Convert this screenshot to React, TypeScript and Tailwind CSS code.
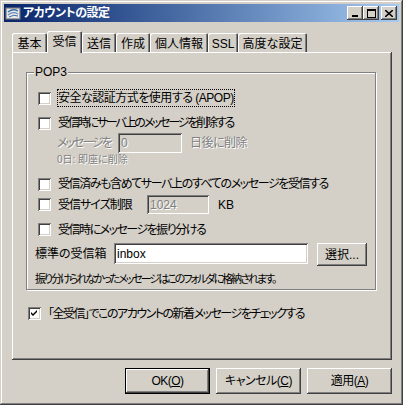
import React from "react";

const raised =
  "shadow-[inset_-1px_-1px_#404040,inset_1px_1px_#fff,inset_-2px_-2px_#808080,inset_2px_2px_#d4d0c8]";
const sunken =
  "shadow-[inset_1px_1px_#808080,inset_-1px_-1px_#fff,inset_2px_2px_#404040,inset_-2px_-2px_#d4d0c8]";
const disabledText = "text-[#808080] [text-shadow:1px_1px_0_#fff]";

function Check({ checked }: { checked?: boolean }) {
  return (
    <div className={`w-[13px] h-[13px] shrink-0 bg-white ${sunken} flex items-center justify-center`}>
      {checked && (
        <svg width="7" height="7" viewBox="0 0 7 7">
          <path d="M0 2 L2 4 L6 0 L6 2 L2 6 L0 4 Z" fill="#000" />
        </svg>
      )}
    </div>
  );
}

function CheckRow({
  label,
  checked,
  focus,
  className = "",
  track,
}: {
  label: string;
  checked?: boolean;
  focus?: boolean;
  className?: string;
  track: string;
}) {
  return (
    <div className={`flex items-center ${className}`}>
      <Check checked={checked} />
      <span
        className={`ml-[6px] h-[18px] leading-[16px] whitespace-nowrap border ${track} ${
          focus ? "border-dotted border-black" : "border-transparent"
        }`}
      >
        {label}
      </span>
    </div>
  );
}

function Tab({ label, width, selected }: { label: string; width: number; selected?: boolean }) {
  return (
    <div
      style={{ width }}
      className={
        selected
          ? "relative z-10 h-[22px] -mb-[1px] bg-[#d4d0c8] rounded-t-[2px] shadow-[inset_1px_1px_#fff,inset_-1px_0_#404040,inset_-2px_0_#808080] flex justify-center pt-[4px] leading-[14px]"
          : "h-[19px] bg-[#d4d0c8] rounded-t-[2px] shadow-[inset_1px_1px_#fff,inset_-1px_0_#404040,inset_-2px_0_#808080] flex justify-center pt-[4px] leading-[14px]"
      }
    >
      {label}
    </div>
  );
}

function TitleButton({ children, className = "" }: { children: React.ReactNode; className?: string }) {
  return (
    <div className={`w-[16px] h-[14px] bg-[#d4d0c8] ${raised} flex items-center justify-center ${className}`}>
      {children}
    </div>
  );
}

function Button({ children, isDefault }: { children: React.ReactNode; isDefault?: boolean }) {
  return (
    <div
      className={`w-[85px] h-[26px] bg-[#d4d0c8] ${raised} flex items-center justify-center tracking-[-0.5px] ${
        isDefault ? "border border-black" : ""
      }`}
    >
      {children}
    </div>
  );
}

export default function App() {
  return (
    <div className="w-[403px] h-[405px] bg-[#d4d0c8] p-[4px] flex flex-col text-[12px] text-black font-['Liberation_Sans','Noto_Sans_CJK_JP',sans-serif] [font-feature-settings:'palt'] shadow-[inset_-1px_-1px_#404040,inset_1px_1px_#d4d0c8,inset_-2px_-2px_#808080,inset_2px_2px_#fff]">
      {/* title bar */}
      <div className="h-[18px] flex items-center bg-linear-to-r from-[#0a246a] to-[#a6caf0] pr-[2px]">
        <svg width="16" height="16" viewBox="0 0 16 16" className="ml-[1px]">
          <rect x="1" y="3" width="14" height="11" fill="#c0c0c0" stroke="#808080" />
          <rect x="2" y="4" width="12" height="9" fill="#e8e8e8" />
          <path d="M3 7 Q8 3 13 6" stroke="#3a6ea5" strokeWidth="1.3" fill="none" />
          <path d="M3 10 Q8 6 13 9" stroke="#6a8ec5" strokeWidth="1.2" fill="none" />
          <path d="M4 12 Q9 9 13 11" stroke="#3a6ea5" strokeWidth="1" fill="none" />
        </svg>
        <span className="ml-[2px] text-white font-bold text-[12px] leading-[16px] tracking-[-0.5px]">アカウントの設定</span>
        <div className="ml-auto flex">
          <TitleButton>
            <svg width="8" height="7" viewBox="0 0 8 7">
              <rect x="1" y="5" width="6" height="2" fill="#000" />
            </svg>
          </TitleButton>
          <TitleButton>
            <svg width="9" height="9" viewBox="0 0 9 9">
              <path d="M0 0 H9 V9 H0 Z M1 2 V8 H8 V2 Z" fill="#000" fillRule="evenodd" />
            </svg>
          </TitleButton>
          <TitleButton className="ml-[2px]">
            <svg width="8" height="7" viewBox="0 0 8 7">
              <path d="M0 0 L8 7 M8 0 L0 7" stroke="#000" strokeWidth="1.6" />
            </svg>
          </TitleButton>
        </div>
      </div>

      <div className="pl-[8px] pt-[9px] flex flex-col">
        {/* tabs */}
        <div className="h-[21px] flex items-end">
          <Tab label="基本" width={35} />
          <Tab label="受信" width={35} selected />
          <Tab label="送信" width={34} />
          <Tab label="作成" width={34} />
          <Tab label="個人情報" width={58} />
          <Tab label="SSL" width={30} />
          <Tab label="高度な設定" width={69} />
        </div>

        {/* panel */}
        <div className="w-[380px] h-[308px] pl-[14px] pt-[20px] flex flex-col shadow-[inset_-1px_-1px_#404040,inset_1px_1px_#fff,inset_-2px_-2px_#808080]">
          <div className="relative w-[350px] h-[218px] border border-[#808080] shadow-[1px_1px_0_#fff,inset_1px_1px_0_#fff] pl-[11px] pt-[15px] flex flex-col">
            <span className="absolute left-[7px] top-[-8px] px-[1px] bg-[#d4d0c8] leading-[14px]">POP3</span>

            <CheckRow className="h-[20px]" label="安全な認証方式を使用する (APOP)" focus track="tracking-[-0.5px]" />
            <CheckRow className="h-[20px] mt-[5px]" label="受信時にサーバ上のメッセージを削除する" track="tracking-[-2.2px]" />

            <div className="h-[20px] pl-[19px] flex items-center">
              <span className={`w-[61px] whitespace-nowrap tracking-[-2px] ${disabledText}`}>メッセージを</span>
              <div className={`w-[64px] h-[20px] bg-[#d4d0c8] ${sunken} pl-[3px] flex items-center ${disabledText}`}>
                0
              </div>
              <span className={`ml-[8px] tracking-[-0.5px] ${disabledText}`}>日後に削除</span>
            </div>
            <div className={`h-[14px] pl-[19px] text-[10px] leading-[14px] ${disabledText}`}>0日: 即座に削除</div>

            <CheckRow
              className="h-[20px] mt-[7px]"
              label="受信済みも含めてサーバ上のすべてのメッセージを受信する"
              track="tracking-[-1.4px]"
            />

            <div className="h-[21px] flex items-center">
              <Check />
              <span className="ml-[7px] w-[89px] leading-[16px] whitespace-nowrap tracking-[-1px]">受信サイズ制限</span>
              <div className={`w-[62px] h-[19px] bg-[#d4d0c8] ${sunken} pl-[3px] flex items-center ${disabledText}`}>
                1024
              </div>
              <span className="ml-[9px]">KB</span>
            </div>

            <CheckRow className="h-[21px] mt-[4px]" label="受信時にメッセージを振り分ける" track="tracking-[-1.5px]" />

            <div className="h-[23px] mt-[3px] -ml-[3px] flex items-start">
              <span className="w-[79px] h-[21px] flex items-center whitespace-nowrap">標準の受信箱</span>
              <div className={`w-[194px] h-[21px] bg-white ${sunken} pl-[3px] flex items-center`}>inbox</div>
              <div className={`ml-[9px] w-[50px] h-[23px] ${raised} flex items-center justify-center`}>選択...</div>
            </div>

            <div className="h-[18px] mt-[4px] -ml-[3px] text-[11px] leading-[18px] whitespace-nowrap tracking-[-2px]">
              振り分けられなかったメッセージはこのフォルダに格納されます。
            </div>
          </div>

          <div className="h-[21px] mt-[13px] ml-[2px] flex items-center">
            <Check checked />
            <span className="ml-[7px] leading-[16px] whitespace-nowrap tracking-[-1.5px]">
              「全受信」でこのアカウントの新着メッセージをチェックする
            </span>
          </div>
        </div>

        {/* buttons */}
        <div className="w-[380px] mt-[8px] flex justify-end gap-[6px]">
          <Button isDefault>
            OK(<u>O</u>)
          </Button>
          <Button>
            キャンセル(<u>C</u>)
          </Button>
          <Button>
            適用(<u>A</u>)
          </Button>
        </div>
      </div>
    </div>
  );
}
